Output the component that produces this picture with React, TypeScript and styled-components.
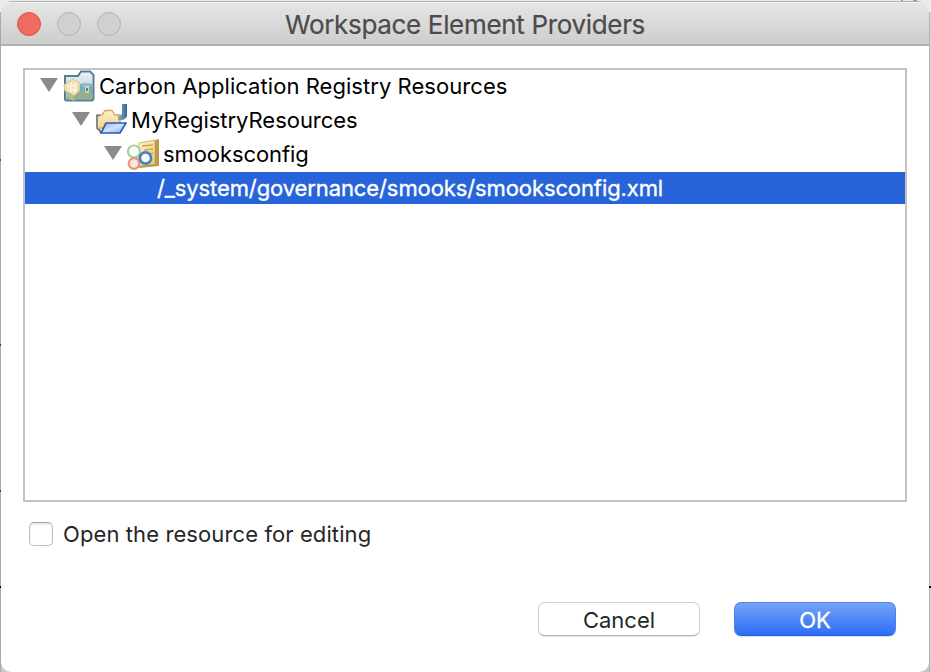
import React from "react";
import styled, { createGlobalStyle } from "styled-components";

const GlobalStyle = createGlobalStyle`
  body { margin: 0; background: #c9c9c9; font-family: Inter, "Liberation Sans", sans-serif; overflow: hidden; }
  * { box-sizing: border-box; }
`;

const Desktop = styled.div`
  height: 672px;
  padding: 1px 2px 0 1px;
  background:
    linear-gradient(#7d2020, #7d2020) 0 344px / 1px 2px no-repeat,
    linear-gradient(#7d2020, #7d2020) 0 490px / 1px 2px no-repeat,
    linear-gradient(#555, #555) 0 159px / 1px 2px no-repeat,
    linear-gradient(#000, #000) 0 586px / 1px 2px no-repeat,
    linear-gradient(#000, #000) 100% 586px / 2px 2px no-repeat,
    linear-gradient(#999, #999) 901px 0 / 2px 1px no-repeat,
    linear-gradient(#999, #999) 913px 0 / 4px 1px no-repeat,
    linear-gradient(to right, #a9a9a9 0 1px, transparent 1px 929px, #b2b2b2 929px 930px, #d6d6d6 930px) 0 12px / 100% 100% no-repeat,
    linear-gradient(#ececec 0 12px, #c9c9c9 80px);
`;

const Window = styled.main`
  height: 671px;
  display: flex;
  flex-direction: column;
  border-radius: 11px 11px 10px 10px;
  overflow: hidden;
  background: #fff;
`;

const TitleBar = styled.header`
  height: 45px;
  flex: none;
  display: grid;
  grid-template-columns: 130px 1fr 130px;
  align-items: center;
  border-bottom: 2px solid #b0b0b0;
  border-top: 1px solid #b4b4b4;
  box-shadow: inset 0 1px #f0f0f0;
  background: linear-gradient(#e6e6e6, #cdcdcd);
`;

const Lights = styled.div`
  display: flex;
  gap: 16px;
  padding: 1px 0 0 16px;
`;

const Light = styled.span<{ $active?: boolean }>`
  width: 24px;
  height: 24px;
  border-radius: 50%;
  background: ${(p) => (p.$active ? "#ed6b5f" : "#d0d0d0")};
  border: 1px solid ${(p) => (p.$active ? "#d9564b" : "#b2b2b2")};
`;

const Label = styled.span<{ $track: number }>`
  letter-spacing: ${(p) => p.$track}px;
  white-space: nowrap;
`;

const Title = styled.h1`
  margin: 0;
  padding-top: 4px;
  justify-self: center;
  font-size: 26px;
  line-height: 32px;
  font-weight: 400;
  color: #4b4b4b;
  -webkit-text-stroke: 0.2px #4b4b4b;
`;

const Content = styled.section`
  padding: 22px 22px 0;
  font-size: 22px;
  line-height: 32px;
  color: #262626;
`;

const Tree = styled.div`
  height: 434px;
  border: 2px solid #c3c3c3;
  color: #000;
`;

const Row = styled.div<{ $indent: number; $selected?: boolean }>`
  display: flex;
  align-items: flex-start;
  height: ${(p) => (p.$selected ? 32 : 34)}px;
  line-height: 32px;
  padding-left: ${(p) => p.$indent}px;
  background: ${(p) => (p.$selected ? "#2864d9" : "transparent")};
  color: ${(p) => (p.$selected ? "#fff" : "#000")};
  -webkit-text-stroke: ${(p) => (p.$selected ? "0.35px #fff" : "0")};
`;

const Arrow = styled.svg`
  width: 18px;
  height: 14px;
  margin: 8px 5px 0 0;
  fill: #8b8b8b;
`;

const Icon = styled.svg`
  width: 32px;
  height: 32px;
  margin-right: 4px;
`;

const CheckRow = styled.label`
  display: flex;
  align-items: center;
  height: 32px;
  margin-top: 16px;
  padding-left: 6px;
  gap: 10px;
`;

const CheckBox = styled.input`
  appearance: none;
  width: 24px;
  height: 24px;
  margin: 0;
  border: 1px solid #bdbdbd;
  border-top-color: #a3a3a3;
  border-radius: 5px;
  background: #fff;
  box-shadow: inset 0 2px 2px #ececec;
`;

const Actions = styled.footer`
  display: flex;
  justify-content: flex-end;
  gap: 34px;
  margin-top: 52px;
  padding-right: 11px;
`;

const Button = styled.button<{ $primary?: boolean }>`
  width: 162px;
  height: 34px;
  padding: 1px 0 0;
  border-radius: 7px;
  font: 400 22px/32px Inter, sans-serif;
  color: ${(p) => (p.$primary ? "#fff" : "#262626")};
  -webkit-text-stroke: ${(p) => (p.$primary ? "0.35px #fff" : "0")};
  border: 1px solid ${(p) => (p.$primary ? "#4a83ee" : "#d0d0d0")};
  border-bottom-color: ${(p) => (p.$primary ? "#1f5de8" : "#b5b5b5")};
  background: ${(p) => (p.$primary ? "linear-gradient(#77a5f7, #2b6bf7) border-box" : "#fff")};
  box-shadow: 0 1px 1px rgba(0, 0, 0, 0.12);
`;

const Disclosure = () => (
  <Arrow viewBox="0 0 18 14"><path d="M0 0H18L9 14Z" /></Arrow>
);

const RegistryIcon = () => (
  <Icon viewBox="0 0 32 32">
    <defs>
      <linearGradient id="reg" x2="0" y2="1"><stop stopColor="#edf4f7" /><stop offset="1" stopColor="#a8c3ca" /></linearGradient>
    </defs>
    <path d="M2 29V6H15L18 1.5H27L30.5 5V28Q30.5 30.5 28 30.5H4Q2 30.5 2 29Z" fill="url(#reg)" stroke="#587f96" strokeWidth="2" />
    <path d="M17 14H29V25H17Z" fill="#75aeb6" />
    <path d="M19 13H27V17H19Z" fill="#8cc1d1" />
    <path d="M22 16H26V23H22Z" fill="#ddd5a8" />
    <path d="M23 18H25V21H23Z" fill="#4e8994" />
    <path d="M4 23L15 21L29 24V29H4Z" fill="#98ad8b" />
    <path d="M1 15L10 9L17 13L16 21L11 26L7 23L2 21Z" fill="#eee0bb" stroke="#dbc399" />
    <path d="M4 16H14M5 20H14M8 12V23M12 12V23" stroke="#fff5dc" strokeWidth="1.5" />
    <path d="M2 21L10 26L12 31L6 29Z" fill="#b9bd88" />
  </Icon>
);

const ProjectIcon = () => (
  <Icon viewBox="0 0 32 32">
    <defs>
      <linearGradient id="front" x2="1" y2="1"><stop stopColor="#86b2f3" /><stop offset=".5" stopColor="#cfe3ff" /><stop offset="1" stopColor="#78a9ee" /></linearGradient>
      <linearGradient id="back" x2="0" y2="1"><stop stopColor="#fff1c7" /><stop offset="1" stopColor="#efcd80" /></linearGradient>
      <linearGradient id="hook" x2="1"><stop stopColor="#8caecb" /><stop offset="1" stopColor="#356992" /></linearGradient>
    </defs>
    <path d="M2 11H7L10 6.5H17L20 11H25V24H5V28L2 24Z" fill="url(#back)" stroke="#cda76a" strokeWidth="1.3" />
    <path d="M1 11.5H5M2 11V24L7 29" fill="none" stroke="#6c7490" strokeWidth="1.5" />
    <path d="M11 19H31L25 29H6Z" fill="url(#front)" stroke="#3159b5" strokeWidth="1.7" />
    <path d="M27 0H32V12Q30 17 23 16V12Q27 12 27 9Z" fill="url(#hook)" />
  </Icon>
);

const ArtifactIcon = () => (
  <Icon viewBox="0 0 32 32">
    <defs>
      <linearGradient id="page" x2="1" y2="1"><stop stopColor="#fff7d7" /><stop offset="1" stopColor="#e8c675" /></linearGradient>
    </defs>
    <path d="M12 5L28 2V26L11 29Z" fill="url(#page)" stroke="#d5b76d" />
    <path d="M28 2L32 1V28L12 30V28L28 26Z" fill="#bd9a4b" />
    <path d="M15 8L26 7M17 12L26 11M22 16L26 15" stroke="#d0a352" strokeWidth="1.4" />
    <circle cx="7" cy="13.5" r="6" fill="#f8fcf6" stroke="#a6d0a6" strokeWidth="2.2" />
    <circle cx="7" cy="25.5" r="5.3" fill="#fce4d8" stroke="#e5987c" strokeWidth="2.2" />
    <circle cx="18.5" cy="20" r="5.6" fill="#f3f9ff" stroke="#4e7fbd" strokeWidth="2.6" />
  </Icon>
);

export default function App() {
  return (
    <Desktop>
      <GlobalStyle />
      <Window>
        <TitleBar>
          <Lights><Light $active /><Light /><Light /></Lights>
          <Title><Label $track={-0.33}>Workspace Element Providers</Label></Title>
        </TitleBar>
        <Content>
          <Tree>
            <Row $indent={15}><Disclosure /><RegistryIcon /><Label $track={0.05}>Carbon Application Registry Resources</Label></Row>
            <Row $indent={47}><Disclosure /><ProjectIcon /><Label $track={-0.03}>MyRegistryResources</Label></Row>
            <Row $indent={79}><Disclosure /><ArtifactIcon /><Label $track={-0.08}>smooksconfig</Label></Row>
            <Row $indent={132} $selected><Label $track={-0.1}>/_system/governance/smooks/smooksconfig.xml</Label></Row>
          </Tree>
          <CheckRow><CheckBox type="checkbox" /><Label $track={0.1}>Open the resource for editing</Label></CheckRow>
          <Actions>
            <Button><Label $track={0}>Cancel</Label></Button>
            <Button $primary><Label $track={0}>OK</Label></Button>
          </Actions>
        </Content>
      </Window>
    </Desktop>
  );
}
